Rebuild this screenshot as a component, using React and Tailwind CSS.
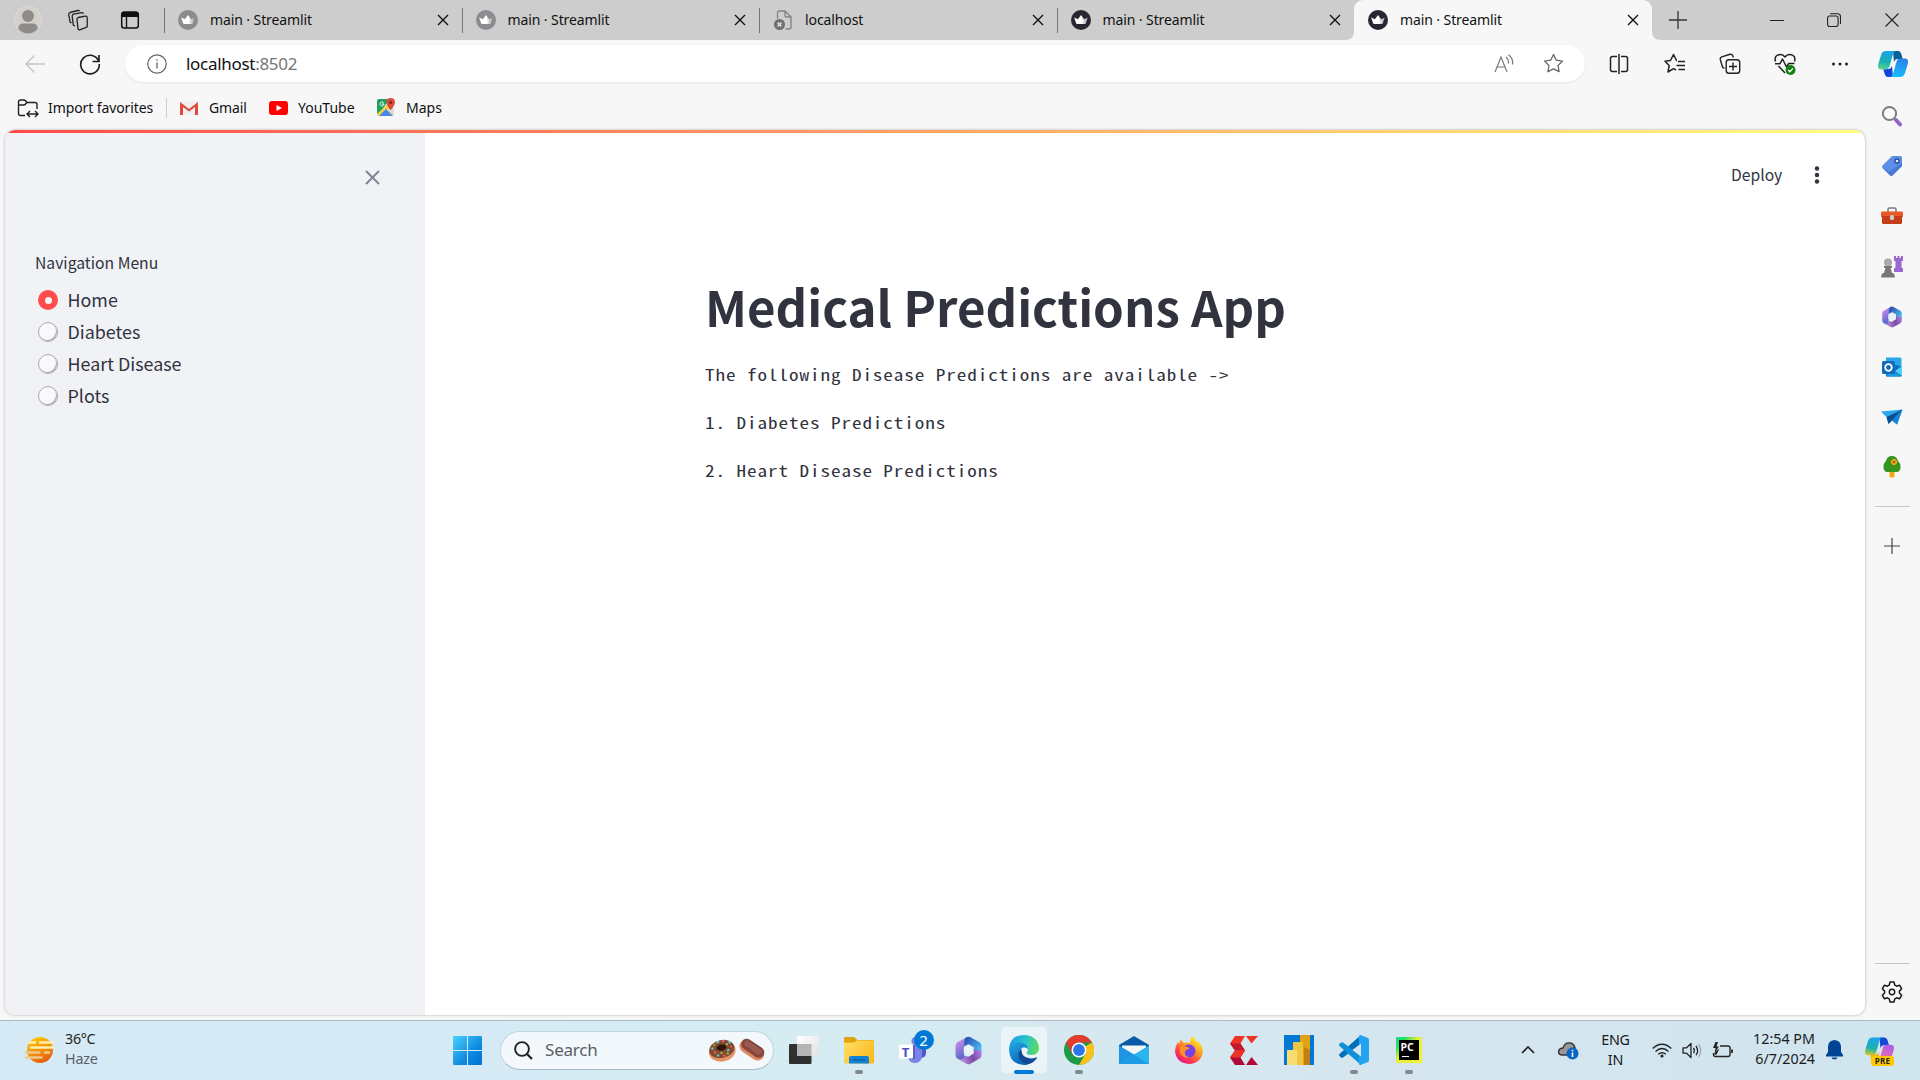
import React from 'react';

const Svg = ({ w = 24, h, vb, children, className = '' }) => (
  <svg width={w} height={h || w} viewBox={vb || `0 0 ${w} ${h || w}`} fill="none" className={`block shrink-0 ${className}`}>
    {children}
  </svg>
);

/* ---------- shared logos ---------- */

const Crown = ({ color, id }) => (
  <Svg w={20}>
    <defs>
      <linearGradient id={id} x1="4" y1="10" x2="17" y2="10" gradientUnits="userSpaceOnUse">
        <stop offset="0.5" stopColor="#fff" />
        <stop offset="1" stopColor="#999" />
      </linearGradient>
    </defs>
    <circle cx="10" cy="10" r="10" fill={color} />
    <path d="M3.2 7.600l3.700 1.700L10 5l3.100 4.300 3.700-1.700-1.900 5.600c-.2.600-1 .9-4.900.9s-4.700-.3-4.900-.9z" fill={`url(#${id})`} />
  </Svg>
);

const M365 = ({ id, w }) => (
  <Svg w={w} vb="0 0 28 28">
    <defs>
      <linearGradient id={`${id}a`} x1="2" y1="6" x2="14" y2="22" gradientUnits="userSpaceOnUse">
        <stop stopColor="#c58be8" />
        <stop offset="1" stopColor="#3a5fc8" />
      </linearGradient>
      <linearGradient id={`${id}b`} x1="10" y1="2" x2="27" y2="16" gradientUnits="userSpaceOnUse">
        <stop stopColor="#2847b0" />
        <stop offset="1" stopColor="#4fd0fa" />
      </linearGradient>
      <linearGradient id={`${id}c`} x1="5" y1="25" x2="26" y2="16" gradientUnits="userSpaceOnUse">
        <stop stopColor="#c99bf0" />
        <stop offset="0.6" stopColor="#7a4aa6" />
        <stop offset="1" stopColor="#b07be0" />
      </linearGradient>
    </defs>
    <path d="M12 1.200L3.400 6.100Q1.500 7.200 1.500 9.300v9.500q0 2 1.700 3l2 1.200q4 1.500 4.600-2.500V10l4-3V1z" fill={`url(#${id}a)`} />
    <path d="M12 1.200q2-1 4 0l8.600 4.900q1.900 1.100 1.900 3.200v8.500L19 14v-3.500L14 8l-4 2V5q0-2.800 2-3.800z" fill={`url(#${id}b)`} />
    <path d="M26.500 14v4.800q0 2-1.700 3L16 26.800q-2 1-4 0L4.500 22.600q5 .8 5.300-3.600L14 20l5-3v-4z" fill={`url(#${id}c)`} />
    <path d="M14 8.800l4.600 2.600v5.300L14 19.300l-4.600-2.600v-5.300z" fill="#e8f1f8" />
  </Svg>
);

const CopilotLogo = ({ id, w, h, warm }) => (
  <Svg w={w} h={h} vb="0 0 30 26">
    <defs>
      <linearGradient id={`${id}a`} x1="8" y1="0" x2="4" y2="20" gradientUnits="userSpaceOnUse">
        <stop stopColor="#18a4e8" />
        <stop offset="0.55" stopColor="#1cb0b0" />
        <stop offset="1" stopColor={warm ? '#ffd000' : '#6ade90'} />
      </linearGradient>
      <linearGradient id={`${id}b`} x1="25" y1="6" x2="18" y2="26" gradientUnits="userSpaceOnUse">
        <stop stopColor={warm ? '#a85cf4' : '#2d7bea'} />
        <stop offset="1" stopColor={warm ? '#ff6f8a' : '#12c0ff'} />
      </linearGradient>
    </defs>
    <path d="M15 0h5q2.500 0 3.300 3l1.500 5H19q-2 0-3 3z" fill={warm ? '#1746d8' : '#0b5f98'} />
    <path d="M15 26h-5q-2.500 0-3.300-3l-1.500-5H11q2 0 3-3z" fill={warm ? '#ffb000' : '#1646d8'} />
    <path d="M8 0h9.500q-1.800.8-2.600 3.500l-3.500 12q-.9 3-4 3H3Q-1 18.300.3 13L3 4Q4.200 0 8 0z" fill={`url(#${id}a)`} />
    <path d="M22 26h-9.500q1.800-.8 2.600-3.500l3.500-12q.9-3 4-3H27q4 .2 2.700 5.500L27 22q-1.200 4-5 4z" fill={`url(#${id}b)`} />
  </Svg>
);

/* ---------- browser tabs ---------- */

const TabX = () => (
  <Svg w={12}>
    <path d="M1 1l10 10M11 1L1 11" stroke="#111" strokeWidth="1.400" />
  </Svg>
);

const BrokenPage = () => (
  <Svg w={20}>
    <path d="M4.500 8.500V3q0-2 2-2H12l6 6v10q0 2-2 2h-3.500M12 1v4.500q0 1.500 1.500 1.500H18" stroke="#858585" strokeWidth="1.400" />
    <circle cx="6.500" cy="14.500" r="5.500" fill="#6f6f6f" />
    <path d="M4.600 12.600l3.800 3.800m0-3.800l-3.800 3.800" stroke="#ddd" strokeWidth="1.500" />
  </Svg>
);

const tabs = [
  { title: 'main · Streamlit', color: '#8c8c90' },
  { title: 'main · Streamlit', color: '#8c8c90' },
  { title: 'localhost' },
  { title: 'main · Streamlit', color: '#262730' },
  { title: 'main · Streamlit', color: '#262730', active: true },
];

const TabStrip = () => (
  <div className="flex h-10 shrink-0 bg-[#cdcdcd]">
    <div className="flex w-[164px] items-center">
      <div className="ml-3.5 w-7">
        <Svg w={28}>
          <circle cx="14" cy="14" r="13.500" fill="#d3d0cc" stroke="#dedbd7" />
          <circle cx="14" cy="10" r="6" fill="#8f8b88" />
          <path d="M4 22.500q1-5 5-5h10q4 0 5 5Q20 27.500 14 27.500T4 22.500z" fill="#8f8b88" />
        </Svg>
      </div>
      <Svg w={22} className="ml-[25px]">
        <g stroke="#222" strokeWidth="1.300" strokeLinejoin="round">
          <path d="M11 8.500l7.500-1.300q1.500-.2 1.700 1.300l.1 8.200q0 1.200-1.100 1.600l-6.500 2.500q-1.500.4-1.700-1.100l-1-9q-.1-1.800 1-2.200z" />
          <path d="M8 17l-1.700-.9L5.200 7.300q-.1-1.700 1.400-2.100l8-1.600q1.500-.2 1.800 1.200" />
          <path d="M4.500 14l-1.400-.9L1.700 5.500Q1.600 4 3 3.500l7.800-2q1.300-.2 1.700.8" />
        </g>
      </Svg>
      <Svg w={20} className="ml-[31px]">
        <rect x="1.700" y="2.200" width="16.600" height="15.800" rx="2.500" stroke="#111" strokeWidth="1.500" />
        <path d="M1.500 7V4q0-2.500 2.500-2.500h12q2.500 0 2.500 2.500v3z" fill="#111" />
        <path d="M6.500 7v11" stroke="#111" strokeWidth="1.400" />
      </Svg>
    </div>
    {tabs.map((t, i) => (
      <div
        key={i}
        className={
          t.active
            ? 'relative flex w-[297.500px] items-center rounded-t-[9px] bg-[#f7f7f7]'
            : 'relative flex w-[297.500px] items-center'
        }
      >
        {!t.active && <div className="absolute left-0 top-2 h-[25px] w-px bg-[#767676]" />}
        {t.active && (
          <>
            <Svg w={9} className="absolute -left-[9px] bottom-0">
              <path d="M9 0v9H0q9 0 9-9z" fill="#f7f7f7" />
            </Svg>
            <Svg w={9} className="absolute -right-[9px] bottom-0">
              <path d="M0 0v9h9Q0 9 0 0z" fill="#f7f7f7" />
            </Svg>
          </>
        )}
        <div className="ml-3.5 w-8">{t.color ? <Crown color={t.color} id={`crown${i}`} /> : <BrokenPage />}</div>
        <span className="flex-1 whitespace-pre text-[14px] leading-5 tracking-[-0.100px] text-[#111]">{t.title}</span>
        <div className="mr-[13px]">
          <TabX />
        </div>
      </div>
    ))}
    <div className="flex flex-1 items-center pl-[17px]">
      <Svg w={18}>
        <path d="M9 0v18M0 9h18" stroke="#333" strokeWidth="1.300" />
      </Svg>
      <Svg w={14} className="ml-[83px]">
        <path d="M0 7.500h14" stroke="#222" strokeWidth="1" />
      </Svg>
      <Svg w={14} className="ml-[43px]">
        <rect x="0.600" y="3" width="10.500" height="10.500" rx="2" stroke="#222" strokeWidth="1.100" />
        <path d="M3 .7h7.500q3 0 3 3V11" stroke="#222" strokeWidth="1.100" />
      </Svg>
      <Svg w={14} className="ml-[44px]">
        <path d="M.5.500l13 13M13.500.500l-13 13" stroke="#222" strokeWidth="1.100" />
      </Svg>
    </div>
  </div>
);

/* ---------- address bar ---------- */

const starPath = 'M10.500 1.500l2.800 5.700 6.200.9-4.500 4.400 1.100 6.200-5.600-2.900-5.600 2.900L6 12.500 1.500 8.100l6.200-.9z';

const AddressBar = () => (
  <div className="flex h-[47px] shrink-0 items-center">
    <Svg w={20} h={18} className="ml-[25px]">
      <path d="M20 9H1M9.500.5L1 9l8.500 8.500" stroke="#c4c4c4" strokeWidth="1.300" />
    </Svg>
    <Svg w={22} className="ml-[34px]">
      <path d="M19.800 8.500A9.300 9.300 0 1 0 20.300 11M20 2v6.500h-6.500" stroke="#1b1b1b" strokeWidth="1.600" />
    </Svg>
    <div className="ml-6 flex h-[37px] w-[1460px] items-center rounded-full bg-white shadow-[0_1px_3px_rgba(0,0,0,0.07)]">
      <Svg w={20} className="ml-[22px]">
        <circle cx="10" cy="10" r="9.200" stroke="#666" strokeWidth="1.200" />
        <path d="M10 8.500v6M10 5.200v1.600" stroke="#666" strokeWidth="1.300" />
      </Svg>
      <span className="ml-[19px] flex-1 text-[17px] leading-6 tracking-[-0.300px] text-[#111]">
        localhost<span className="text-[#767676]">:8502</span>
      </span>
      <Svg w={20} className="mr-[29px]">
        <path d="M1 18L7 3l6 15M3 13h8M12 3q3 2.500 2.300 6.500M14.500.8q5 3.700 4 9.700" stroke="#777" strokeWidth="1.200" />
      </Svg>
      <Svg w={21} className="mr-[21px]">
        <path d={starPath} stroke="#666" strokeWidth="1.300" strokeLinejoin="round" />
      </Svg>
    </div>
    <Svg w={20} className="ml-6">
      <path d="M8 2.500H3.500q-2 0-2 2v11q0 2 2 2H8M10 0v20M12 2.500h4.500q2 0 2 2v11q0 2-2 2H12" stroke="#222" strokeWidth="1.500" />
    </Svg>
    <Svg w={22} className="ml-[35px]">
      <path d="M13 7.500h-.5L9.500 1.500l-3 6L1 8.300 5.200 12.500 4 19l5.500-3.300L12 17M14 8.500h7M12.500 12.500H21M14.500 16.500H21" stroke="#222" strokeWidth="1.500" strokeLinejoin="round" />
    </Svg>
    <Svg w={22} className="ml-[33px]">
      <path d="M5.500 15.500L3.500 14 1.300 6.500q-.5-2 1.500-2.700L11 1.300q2-.4 2.900 1.700l.4 1.500" stroke="#222" strokeWidth="1.400" />
      <rect x="7.200" y="6.700" width="13.500" height="13.500" rx="2.800" stroke="#222" strokeWidth="1.400" />
      <path d="M14 9.500v8M10 13.500h8" stroke="#222" strokeWidth="1.400" />
    </Svg>
    <Svg w={22} className="ml-[33px]">
      <path d="M1.500 8.500Q0 4 3.500 2.200 8 0 11 4q3-4 7.500-1.800Q22 4 20.500 8.500M4.500 13l6.500 7M1 10.700h5L8.500 6l4 8 2.200-3.500h5.800" stroke="#222" strokeWidth="1.500" strokeLinejoin="round" />
      <circle cx="16.500" cy="17" r="5" fill="#118011" />
      <path d="M14.200 17l1.700 1.700 3-3.300" stroke="#fff" strokeWidth="1.300" />
    </Svg>
    <Svg w={18} h={4} className="ml-[35px]">
      <circle cx="2.500" cy="2" r="1.500" fill="#222" />
      <circle cx="9" cy="2" r="1.500" fill="#222" />
      <circle cx="15.500" cy="2" r="1.500" fill="#222" />
    </Svg>
    <div className="ml-[29px]">
      <CopilotLogo id="cpTop" w={30} h={26} />
    </div>
  </div>
);

const Bookmarks = () => (
  <div className="flex h-[43px] shrink-0 items-center whitespace-nowrap pb-[2px] text-[14px] text-[#111]">
    <Svg w={22} h={20} className="ml-[17px]">
      <path d="M8 17.500H3.500q-2 0-2-2V4q0-2 2-2h3.200Q8 2 8.700 3L10 4.500h8q2 0 2 2V11M1.500 7h5q1.300 0 2-1L10 4.500" stroke="#222" strokeWidth="1.400" />
      <path d="M10.500 16h10M13 13l-3 3 3 3M18 13l3 3-3 3" stroke="#222" strokeWidth="1.400" />
    </Svg>
    <span className="ml-[9px] w-[118px] tracking-[-0.100px]">Import favorites</span>
    <div className="h-5 w-px bg-[#cfcfcf]" />
    <Svg w={20} h={16} className="ml-3">
      <rect x="1" y="1" width="18" height="14" fill="#efefef" />
      <path d="M1 15V2l9 7 9-7v13h-3V7l-6 4.500L4 7v8z" fill="#dd4b3e" />
    </Svg>
    <span className="ml-2.5 w-[60px] tracking-[-0.100px]">Gmail</span>
    <Svg w={19} h={14}>
      <rect width="19" height="14" rx="3.200" fill="#f00" />
      <path d="M7.500 4l5.500 3-5.500 3z" fill="#fff" />
    </Svg>
    <span className="ml-2.5 w-[79px]">YouTube</span>
    <Svg w={19}>
      <path d="M0 3q0-2 2-2h11L4 13 0 16z" fill="#1fa05f" />
      <path d="M0 16L14 3l3 10v3l-2 2H2q-2 0-2-2z" fill="#f5cf48" />
      <path d="M2 18l7-7 7 7z" fill="#4488ee" />
      <path d="M10 12l5-4 2 2v7z" fill="#ddd" />
      <path d="M13.500 0q4.500 0 4.500 4.300 0 3-4.500 8-4-5-4-8Q9.500 0 13.500 0z" fill="#dd4b3e" />
      <circle cx="13.700" cy="4.500" r="1.500" fill="#7b231d" />
      <path d="M6.500 4.600A2 2 0 1 0 7 6H5" stroke="#fff" strokeWidth="1" />
    </Svg>
    <span className="ml-2.5">Maps</span>
  </div>
);

/* ---------- page ---------- */

const source = 'font-["Noto_Sans_CJK_SC","Open_Sans",sans-serif]';

const Radio = ({ label, on }) => (
  <div className="flex h-8 items-center">
    {on ? (
      <div className="flex size-5 items-center justify-center rounded-full bg-[#ff4b4b]">
        <div className="size-[7px] rounded-full bg-[#f3f4f8]" />
      </div>
    ) : (
      <div className="size-5 rounded-full border border-[#a9abb4] bg-[#f9f9fc] shadow-[inset_-1px_-1px_0.500px_rgba(90,90,105,0.45)]" />
    )}
    <span className="-mt-[2px] ml-[9.500px] text-[17.900px] leading-[30px]">{label}</span>
  </div>
);

const StreamlitPage = () => (
  <div className="ml-[5px] flex h-[885px] w-[1860px] flex-col overflow-hidden rounded-[10px] bg-white shadow-[0_0_3px_rgba(0,0,0,0.3)]">
    <div className="h-[3px] shrink-0 bg-[linear-gradient(90deg,#ff4b4b,#fffd80)]" />
    <div className={`flex flex-1 text-[#31333f] ${source}`}>
      <div className="w-[420px] bg-[#f0f2f6]">
        <div className="flex justify-end pr-[45px] pt-[37px]">
          <Svg w={15}>
            <path d="M1 1l13 13M14 1L1 14" stroke="#808495" strokeWidth="2" />
          </Svg>
        </div>
        <div className="ml-[30px] mt-[65px] text-[15.700px] leading-[26px]">Navigation Menu</div>
        <div className="ml-[33px] mt-2">
          <Radio label="Home" on />
          <Radio label="Diabetes" />
          <Radio label="Heart Disease" />
          <Radio label="Plots" />
        </div>
      </div>
      <div className="flex-1">
        <div className="flex h-[84px] items-center justify-end">
          <span className="w-[51px] text-[15.700px] leading-6">Deploy</span>
          <Svg w={6} h={18} className="ml-8 mr-[45px]">
            <circle cx="3" cy="2.500" r="2.200" fill="#31333f" />
            <circle cx="3" cy="9" r="2.200" fill="#31333f" />
            <circle cx="3" cy="15.500" r="2.200" fill="#31333f" />
          </Svg>
        </div>
        <div className="ml-[280px] mt-[56px]">
          <h1 className="h-[66px] whitespace-nowrap text-[49.200px] font-bold leading-[66px]">Medical Predictions App</h1>
          <div className='mt-[12px] w-[900px] origin-left scale-x-[1.220] whitespace-pre font-["Noto_Sans_Mono_CJK_SC","Liberation_Mono",monospace] text-[15.700px] leading-[48px] tracking-[0.756px]'>
            <p>The following Disease Predictions are available -&gt;</p>
            <p>1. Diabetes Predictions</p>
            <p>2. Heart Disease Predictions</p>
          </div>
        </div>
      </div>
    </div>
  </div>
);

/* ---------- Edge sidebar ---------- */

const sideIcons = [
  <Svg w={22}>
    <path d="M13.500 13.500l3 3" stroke="#999" strokeWidth="2" />
    <path d="M15 15l4 4.500" stroke="#9265c9" strokeWidth="4" strokeLinecap="round" />
    <circle cx="8.500" cy="8.500" r="6.600" fill="#fafafa" stroke="#7d7d7d" strokeWidth="2" />
  </Svg>,
  <Svg w={22}>
    <path d="M11 1h8.500q1.500 0 1.500 1.500V11L11.500 20.500q-1.500 1-2.700-.2L1.500 13q-1-1.200 0-2.500z" fill="#5c8ee6" />
    <path d="M1.300 12.500l8 8q1 .6 2 0L21 11V8L8 17z" fill="#4a78d6" />
    <circle cx="16" cy="6" r="2" fill="#eef" stroke="#24489b" strokeWidth="1.300" />
  </Svg>,
  <Svg w={22} h={18}>
    <path d="M7 5V2.500Q7 1 8.500 1h5Q15 1 15 2.500V5" stroke="#7b7b7b" strokeWidth="1.500" />
    <rect y="4.500" width="22" height="6" rx="1" fill="#e8592a" />
    <path d="M1 9h20v6.500q0 1.500-1.500 1.500h-17Q1 17 1 15.500z" fill="#c43e16" />
    <rect x="9" y="8" width="4" height="5" rx="1.500" fill="#ccc" />
  </Svg>,
  <Svg w={22}>
    <path d="M13 0h2v2h1.500V0h2v2H20V0h2v5h-1.500v6.500l1.500 1V16h-9v-3.500l1.500-1V5H13z" fill="#9a68cf" />
    <circle cx="7" cy="6.500" r="4" fill="#aaa" />
    <path d="M3 10h8v2H9.500l1.500 5h1q2 1 2 4.500H0Q0 18 2 17h1l1.500-5H3z" fill="#777" />
  </Svg>,
  <M365 id="m365side" w={22} />,
  <Svg w={22}>
    <path d="M5 1.500h14q1.500 0 1.500 1.500v9H5z" fill="#28a8ea" />
    <path d="M5 9h10l6 2v8q0 1.500-1.500 1.500H5z" fill="#0a6fc0" />
    <path d="M21 10l-7 5 7 5z" fill="#50d0fa" />
    <path d="M6 15h8l6 5.500H6z" fill="#159be0" />
    <rect x="1" y="5" width="13" height="13" rx="1.500" fill="#0f6cbd" />
    <circle cx="7.500" cy="11.500" r="3.300" stroke="#fff" strokeWidth="1.800" />
  </Svg>,
  <Svg w={22} h={18}>
    <path d="M0 3.500L21.500 1.500 16 16.500l-5-4-3.500 3.500-2-7z" fill="#2ba8ea" />
    <path d="M5.500 9l16-7.500-10.500 11-3.500 3.500z" fill="#0c4f8c" />
    <path d="M21.500 1.500L11 12.500l5 4z" fill="#1586d2" />
  </Svg>,
  <Svg w={22}>
    <rect x="8.500" y="15" width="5" height="6.500" rx="1" fill="#f0a818" />
    <path d="M11 0q4.500 0 6 5 2.500 2 2.500 6 0 5-4 5h-9q-4 0-4-5 0-4 2.500-6Q6 0 11 0z" fill="#35951f" />
    <path d="M13 3v6M10 6h6" stroke="#fbb014" strokeWidth="3" />
    <circle cx="13" cy="6" r="1.300" fill="#c8401c" />
  </Svg>,
];

const EdgeSidebar = () => (
  <div className="flex flex-1 flex-col items-center pr-px">
    <div className="-mt-[39px] flex flex-col items-center">
      {sideIcons.map((icon, i) => (
        <div key={i} className="flex h-[50.200px] items-center justify-center">
          {icon}
        </div>
      ))}
    </div>
    <div className="mt-[13px] h-px w-[35px] bg-[#c8c8c8]" />
    <Svg w={16} className="mt-[31px]">
      <path d="M8 0v16M0 8h16" stroke="#444" strokeWidth="1.200" />
    </Svg>
    <div className="mt-auto h-px w-[35px] bg-[#c8c8c8]" />
    <Svg w={22} className="mb-[17px] mt-[17px]">
      <path d="M9 1h4l.8 3.200 1.800 1 3.100-.9 2 3.500-2.300 2.300v1.900l2.300 2.200-2 3.500-3.100-.9-1.800 1L13 21H9l-.8-3.200-1.800-1-3.100.9-2-3.500 2.300-2.200v-1.900L1.300 7.800l2-3.500 3.100.9 1.800-1z" stroke="#1b1b1b" strokeWidth="1.500" strokeLinejoin="round" />
      <circle cx="11" cy="11" r="2.700" stroke="#1b1b1b" strokeWidth="1.400" />
    </Svg>
  </div>
);

/* ---------- taskbar ---------- */

const Weather = () => (
  <Svg w={30} h={26}>
    <defs>
      <linearGradient id="sun" x1="8" y1="0" x2="20" y2="26" gradientUnits="userSpaceOnUse">
        <stop stopColor="#ffcb05" />
        <stop offset="1" stopColor="#e8590c" />
      </linearGradient>
    </defs>
    <circle cx="15" cy="13" r="13" fill="url(#sun)" />
    <path d="M4 5.500h6M15 5.500h13M6 10.500h22" stroke="#ffeeb0" strokeWidth="2.600" strokeLinecap="round" />
    <path d="M1.500 15.500h13M20 15.500h4M1.500 20.500h15" stroke="#ecc88a" strokeWidth="2.600" strokeLinecap="round" />
  </Svg>
);

const Start = () => (
  <Svg w={29}>
    <defs>
      <linearGradient id="win" x1="0" y1="0" x2="29" y2="29" gradientUnits="userSpaceOnUse">
        <stop stopColor="#4cd2ff" />
        <stop offset="0.6" stopColor="#0f8ae0" />
        <stop offset="1" stopColor="#0072d0" />
      </linearGradient>
    </defs>
    <path d="M1 0h13v14H0V1q0-1 1-1zM15 0h13q1 0 1 1v13H15zM0 15h14v14H1q-1 0-1-1zM15 15h14v13q0 1-1 1H15z" fill="url(#win)" />
  </Svg>
);

const SearchBox = () => (
  <div className="flex h-[39px] w-[274px] items-center rounded-full border border-[#c3d5de] border-b-[#a9bac4] bg-[#f2f8fc]">
    <Svg w={19} className="ml-[13px]">
      <circle cx="8" cy="8" r="6.900" stroke="#222" strokeWidth="1.900" />
      <path d="M13 13l5 5" stroke="#222" strokeWidth="2.300" />
    </Svg>
    <span className="ml-3 flex-1 text-[17px] leading-6 tracking-[-0.200px] text-[#5c6063]">Search</span>
    <Svg w={58} h={26} className="mr-[7px]">
      <g transform="rotate(-12 14 13)">
        <ellipse cx="14" cy="14.500" rx="13.500" ry="10" fill="#e89468" />
        <ellipse cx="14" cy="12" rx="12.800" ry="9" fill="#854a2e" />
        <ellipse cx="14" cy="10.500" rx="5" ry="3" fill="#2e1509" />
        <path d="M4 9l2 1M22 6l2 2M10 4.500h3M19 15l2-1M8 17l2 1" stroke="#63d0d0" strokeWidth="2" />
        <path d="M6 13l1 2M16 4l2 1M14 19h2M23 11l1 1" stroke="#f25a80" strokeWidth="2" />
        <path d="M12 15.500l2 .5M7 6l1 1M19 9l2-1M18 18l2-1" stroke="#8bc34a" strokeWidth="2" />
      </g>
      <g transform="rotate(34 44 12)">
        <rect x="31" y="6.500" width="27" height="13" rx="6.500" fill="#dc875c" />
        <rect x="31.500" y="5.500" width="25.500" height="11" rx="5.500" fill="#84493c" />
        <rect x="34" y="7.500" width="20" height="5.500" rx="2.700" fill="#99594d" />
      </g>
    </Svg>
  </div>
);

const TaskView = () => (
  <Svg w={30} h={28}>
    <defs>
      <linearGradient id="tv" x1="8" y1="0" x2="30" y2="20" gradientUnits="userSpaceOnUse">
        <stop stopColor="#fff" />
        <stop offset="1" stopColor="#e2e2e2" />
      </linearGradient>
    </defs>
    <rect y="8" width="22.500" height="20" rx="1" fill="#303030" />
    <path d="M8 1q0-1 1-1h20q1 0 1 1v18q0 1-1 1H8z" fill="url(#tv)" />
    <path d="M8 8h14.500v12H8z" fill="#b4b4b4" />
  </Svg>
);

const Folder = () => (
  <Svg w={30} h={27}>
    <defs>
      <linearGradient id="fold" x1="0" y1="3" x2="30" y2="27" gradientUnits="userSpaceOnUse">
        <stop stopColor="#ffdf6b" />
        <stop offset="1" stopColor="#fbb712" />
      </linearGradient>
    </defs>
    <path d="M0 1.500Q0 0 1.500 0H10l3.500 3H29q1 0 1 1v6H0z" fill="#e0a30c" />
    <path d="M0 5.500h10L13 3.500h16q1 0 1 1V25q0 1.500-1.500 1.500h-27Q0 26.500 0 25z" fill="url(#fold)" />
    <path d="M5 26.500V21q0-2 2-2h16q2 0 2 2v5.500z" fill="#1182d6" />
    <path d="M9 23h12" stroke="#0a4f93" />
  </Svg>
);

const Teams = () => (
  <div className="relative">
    <Svg w={30} h={28}>
      <circle cx="16.500" cy="5" r="4" fill="#7b83eb" />
      <path d="M20 8h7v9q0 5-6 5z" fill="#5059c9" />
      <path d="M9 9h14v12q-1 6-8 6-6-1-6-7z" fill="#7b83eb" />
      <path d="M10 9h6v14h-6z" fill="#5a60b8" />
      <rect x="0" y="8.500" width="14" height="14" rx="1" fill="#fff" />
    </Svg>
    <span className="absolute left-[3px] top-[9px] w-2 text-center text-[13px] font-bold leading-[14px] text-[#4b53bc]">T</span>
    <span className="absolute -right-[5px] -top-[6px] flex size-5 items-center justify-center rounded-full bg-[#0078d4] text-[15px] text-white">2</span>
  </div>
);

const EdgeLogo = () => (
  <Svg w={30}>
    <defs>
      <linearGradient id="edA" x1="2" y1="8" x2="30" y2="14" gradientUnits="userSpaceOnUse">
        <stop stopColor="#1f9fe0" />
        <stop offset="0.5" stopColor="#2cc4cf" />
        <stop offset="1" stopColor="#62dd4c" />
      </linearGradient>
      <linearGradient id="edB" x1="3" y1="10" x2="14" y2="29" gradientUnits="userSpaceOnUse">
        <stop stopColor="#1ba0e0" />
        <stop offset="1" stopColor="#0f62b4" />
      </linearGradient>
    </defs>
    <path d="M0 14Q1 0 15 0q13.500.5 15 12.500 0 7.500-7.500 7.500-5 0-5-2.500 1.500-1 1.500-3Q18.500 9 11 9 4 9 0 14z" fill="url(#edA)" />
    <path d="M0 14Q3 7 11 7.500q7 .5 8 6.500-5-4-8 1-2 6 3 11 2.500 2.500 5 3.500-2 .5-4 .5Q0 29 0 14z" fill="url(#edB)" />
    <path d="M12.500 13Q6.500 20 12 26q5.500 5.500 11.500 1.500 3-2 4.500-4.500.3-1-1-.5-3 1.200-6.500.8Q11.500 22 12.500 13z" fill="#0f4a94" />
  </Svg>
);

const Chrome = () => (
  <Svg w={30}>
    <circle cx="15" cy="15" r="15" fill="#1f9a48" />
    <path d="M15 15l13-7.500A15 15 0 0 1 15 30l7-12z" fill="#fbc116" />
    <path d="M2 7.500A15 15 0 0 1 28 7.500H15L8.500 18.700z" fill="#e33b2e" />
    <circle cx="15" cy="15" r="7.500" fill="#fff" />
    <circle cx="15" cy="15" r="5.900" fill="#2a75ea" />
  </Svg>
);

const Mail = () => (
  <Svg w={30} h={28}>
    <path d="M0 9L15 0l15 9v4H0z" fill="#0a5ba6" />
    <path d="M3 9.500h24V14L15 21 3 14z" fill="#f3f5f7" />
    <path d="M0 9.500l15 9L30 28H0z" fill="#1d95e4" />
    <path d="M30 9.500l-15 9-15 9.500h30z" fill="#2bb5ee" />
    <path d="M15 18.500L0 28h30z" fill="#1d9ce4" />
  </Svg>
);

const Firefox = () => (
  <Svg w={28}>
    <defs>
      <linearGradient id="ff" x1="23" y1="2" x2="6" y2="27" gradientUnits="userSpaceOnUse">
        <stop stopColor="#fff040" />
        <stop offset="0.4" stopColor="#ff9a20" />
        <stop offset="0.75" stopColor="#ff3850" />
        <stop offset="1" stopColor="#e31587" />
      </linearGradient>
    </defs>
    <path d="M17 0q3 2 4.500 6l1.500-1q5 5 4.800 11Q26 27.500 14 28 1 27 0 15q0-5 3-9l1 2 1.500-4.500L9 7q3-1 6 0 0-4 2-7z" fill="url(#ff)" />
    <circle cx="14" cy="15" r="6.500" fill="#7542e5" />
    <path d="M5 10.500q6-1 10 1.500l-5 3q-1 5 4 6.500-7 1-9-5z" fill="#ff9226" />
  </Svg>
);

const Mixer = () => (
  <Svg w={28} h={29}>
    <path d="M5 0h10L10.500 7.500 15 14.500H5L0 7.500z" fill="#ee3524" />
    <path d="M0 7.500h10.500L15 14.500H5z" fill="#c3192e" />
    <path d="M5 14.500h10L10.500 21.500 15 29H5L0 21.500z" fill="#b00a36" />
    <path d="M5 14.500h10l-4.500 7H0z" fill="#ee3524" />
    <path d="M16 0h12l-6.500 7.500z" fill="#ee3524" />
    <path d="M16 29h12l-6.500-8z" fill="#b00a36" />
  </Svg>
);

const PowerBI = () => (
  <Svg w={30}>
    <path d="M0 0h30v30H0z" fill="#0078d4" />
    <path d="M16 0h10v30H16z" fill="#e0a20e" />
    <path d="M20 12l6 3v15h-6z" fill="#c87b10" />
    <path d="M9 7h10v23H9z" fill="#efc643" />
    <path d="M3 15h10v15H3z" fill="#f7dc72" />
  </Svg>
);

const VSCode = () => (
  <Svg w={30}>
    <path d="M22 0v9L4 22.500q-1 .7-2 0L.4 21q-.8-1 0-2z" fill="#0070b8" />
    <path d="M22 30v-9L4 7.500q-1-.7-2 0L.4 9q-.8 1 0 2z" fill="#1190da" />
    <path d="M21.500 0L29 3q1 .6 1 1.700v20.600q0 1.100-1 1.700l-7.500 3q-1 .2-1.500-1V1q.5-1.200 1.500-1z" fill="#24a3f0" />
    <path d="M22 8.500v13L13.500 15z" fill="#d7e7f1" />
  </Svg>
);

const PyCharm = () => (
  <div className="flex size-[26px] items-center justify-center bg-[linear-gradient(135deg,#21d789_0%,#21e060_20%,#e8ee3c_45%,#f1f22c_100%)]">
    <div className="relative size-5 bg-black pl-[2px] pt-[1px] text-[10.500px] font-bold leading-3 text-white">
      PC
      <div className="absolute bottom-[3px] left-[3px] h-px w-[7px] bg-white" />
    </div>
  </div>
);

const apps = [
  { icon: <TaskView /> },
  { icon: <Folder />, run: true },
  { icon: <Teams /> },
  { icon: <M365 id="m365task" w={29} /> },
  { icon: <EdgeLogo />, active: true },
  { icon: <Chrome />, run: true },
  { icon: <Mail /> },
  { icon: <Firefox /> },
  { icon: <Mixer /> },
  { icon: <PowerBI /> },
  { icon: <VSCode />, run: true },
  { icon: <PyCharm />, run: true },
];

const Taskbar = () => (
  <div className="flex h-[60px] w-full shrink-0 border-t border-[#a9bac4] bg-[linear-gradient(90deg,#d6eaf5_0%,#d5eaf5_25%,#d5ecf2_42%,#d6e9f0_55%,#d5e5ef_75%,#d0e5ee_100%)]">
    <div className="flex w-[453px] items-center pb-[2px]">
      <div className="ml-[25px]">
        <Weather />
      </div>
      <div className="ml-[10px] pb-[2px] text-[14.300px] leading-5 text-[#222]">
        <div className="tracking-[-0.300px]">36°C</div>
        <div className="tracking-[-0.200px] text-[#54606a]">Haze</div>
      </div>
    </div>
    <div className="flex items-center pb-px">
      <Start />
      <div className="ml-[18px]">
        <SearchBox />
      </div>
      <div className="ml-[2px] flex">
        {apps.map((a, i) => (
          <div key={i} className="flex w-[55px] justify-center">
            <div
              className={
                a.active
                  ? 'relative flex size-12 items-center justify-center rounded-[5px] border border-[#dde9ef] bg-[#e9f4f8]'
                  : 'relative flex size-12 items-center justify-center'
              }
            >
              {a.icon}
              {a.active && <div className="absolute -bottom-px h-1 w-5 rounded-full bg-[#0078d4]" />}
              {a.run && <div className="absolute bottom-0 h-1 w-2 rounded-full bg-[#828a8f]" />}
            </div>
          </div>
        ))}
      </div>
    </div>
    <div className="ml-auto flex w-[399px] shrink-0 items-center pb-px text-[14.300px] leading-5 text-[#1b1b1b]">
      <Svg w={14} h={8}>
        <path d="M1 7l6-6 6 6" stroke="#222" strokeWidth="1.700" />
      </Svg>
      <Svg w={21} h={19} className="ml-[23px]">
        <path d="M4 14q-4-.5-3.300-4Q1.500 7 5 7q2-6 7-5 4 .5 5 5-6 0-8 7z" fill="#999" stroke="#333" strokeWidth="1.400" />
        <circle cx="14.500" cy="12.500" r="6" fill="#0a66c2" />
        <path d="M14.500 11.500v4.500M14.500 8.800v1.500" stroke="#fff" strokeWidth="1.600" />
      </Svg>
      <div className="ml-[20px] w-[33px] text-center tracking-[-0.200px]">
        <div>ENG</div>
        <div>IN</div>
      </div>
      <Svg w={20} h={15} className="ml-[20px]">
        <path d="M.700 5.500q9.300-8.500 18.600 0M3.500 8.500q6.500-5.800 13 0M6.200 11.300q3.800-3.300 7.600 0" stroke="#222" strokeWidth="1.400" />
        <circle cx="10" cy="13" r="1.600" fill="#222" />
      </Svg>
      <Svg w={20} h={17} className="ml-[10px]">
        <path d="M1 5.800h3.500L9 1.500v14l-4.500-4.300H1z" stroke="#222" strokeWidth="1.300" strokeLinejoin="round" />
        <path d="M11.500 5.800q1.700 2.700 0 5.400M14 3.800q3.200 4.700 0 9.400" stroke="#222" strokeWidth="1.300" />
        <path d="M16.500 1.800q4.500 6.700 0 13.400" stroke="#9aa9b0" strokeWidth="1.200" />
      </Svg>
      <Svg w={21} h={17} className="ml-[10px]">
        <path d="M8 4h8q2 0 2 2v6.500q0 2-2 2H3.500q-2 0-2-2V11" stroke="#222" strokeWidth="1.400" />
        <path d="M20 7.500v3.500" stroke="#222" strokeWidth="1.800" />
        <path d="M3.500 0L1 6h2.500L2.500 11 7 4.500H4.500L6 0zM2.500 12.800V10l5-3.500-3 6.300z" fill="#222" />
      </Svg>
      <div className="ml-[16px] w-[66px] whitespace-nowrap pb-[2px] text-right">
        <div className="flex justify-end">12:54 PM</div>
        <div className="flex justify-end">6/7/2024</div>
      </div>
      <Svg w={17} h={20} className="ml-[11px]">
        <path d="M8.500 0Q15 .5 15 7v5l2 3v1.500H0V15l2-3V7Q2 .5 8.500 0zM5.500 17.500h6q-.5 2-3 2t-3-2z" fill="#004593" />
      </Svg>
      <div className="relative ml-[22px]">
        <CopilotLogo id="cpTask" w={29} h={26} warm />
        <span className="absolute -bottom-[3px] left-[6px] flex h-[10px] w-[23px] items-center justify-center rounded-[3px] bg-[#ffc800] text-[8px] font-bold leading-none tracking-[0.300px] text-[#222]">
          PRE
        </span>
      </div>
    </div>
  </div>
);

export default function App() {
  return (
    <div className='flex h-[1080px] w-[1920px] flex-col overflow-hidden bg-[#f7f7f7] font-["Noto_Sans","Open_Sans",sans-serif]'>
      <TabStrip />
      <AddressBar />
      <Bookmarks />
      <div className="flex h-[890px] shrink-0">
        <StreamlitPage />
        <EdgeSidebar />
      </div>
      <Taskbar />
    </div>
  );
}
